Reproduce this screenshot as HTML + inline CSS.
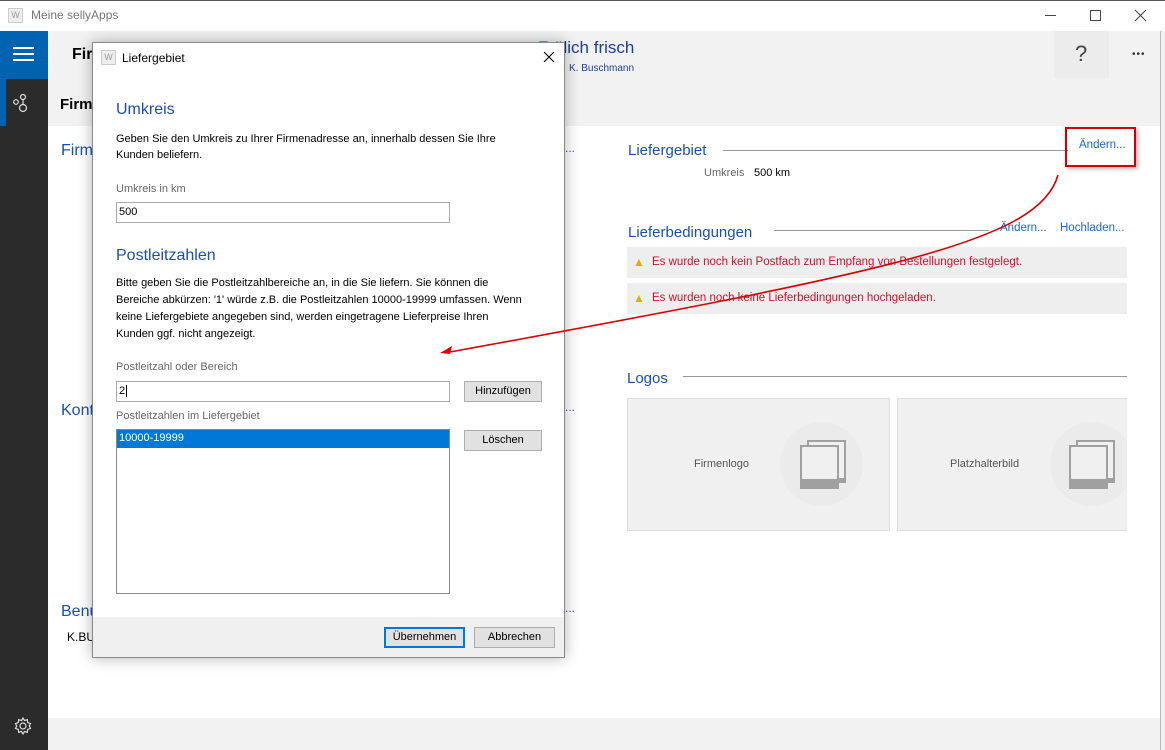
<!DOCTYPE html>
<html><head><meta charset="utf-8"><style>
*{margin:0;padding:0;box-sizing:border-box}
body{width:1165px;height:750px;overflow:hidden;position:relative;background:#fff;font-family:"Liberation Sans",sans-serif;font-size:12px;color:#000}
.a{position:absolute}
.blue{color:#1a4fb0}
.link{color:#1565d8}
</style></head><body>
<!-- title bar -->
<div class="a" style="left:0;top:0;width:1165px;height:31px;background:#fff;border-top:1px solid #555"></div>
<div class="a" style="left:8px;top:8px;width:15px;height:15px;background:#eee;border:1px solid #ccc;font-size:9px;color:#999;text-align:center;line-height:13px">W</div>
<div class="a" style="left:31px;top:8px;font-size:12px;color:#777">Meine sellyApps</div>
<svg class="a" style="left:1040px;top:5px" width="110" height="22" fill="none" stroke="#444" stroke-width="1"><path d="M5 10.5h11"/><rect x="50.5" y="5.5" width="10" height="10"/><path d="M95 5l11 11M106 5l-11 11"/></svg>
<!-- sidebar -->
<div class="a" style="left:0;top:31px;width:48px;height:719px;background:#2b2b2b"></div>
<div class="a" style="left:0;top:31px;width:48px;height:48px;background:#0063b1"></div>
<div class="a" style="left:13px;top:47px;width:21px;height:2px;background:#fff;box-shadow:0 6px 0 #fff,0 12px 0 #fff"></div>
<div class="a" style="left:0;top:79px;width:6px;height:47px;background:#0063b1"></div>
<svg class="a" style="left:12px;top:92px" width="22" height="22" viewBox="0 0 22 22" fill="none" stroke="#ddd" stroke-width="1.2"><circle cx="4" cy="10" r="2.3"/><circle cx="11" cy="5" r="2.5"/><circle cx="11" cy="16" r="3.5"/><path d="M11 7.5v5"/></svg>
<svg class="a" style="left:13px;top:716px" width="20" height="20" viewBox="0 0 20 20" fill="none" stroke="#ddd" stroke-width="1.2"><circle cx="10" cy="10" r="3"/><path d="M10 2l1.5 2.5 2.8-.8.4 2.9 2.8 1-1.2 2.4 1.2 2.4-2.8 1-.4 2.9-2.8-.8L10 18l-1.5-2.5-2.8.8-.4-2.9-2.8-1L3.7 10 2.5 7.6l2.8-1 .4-2.9 2.8.8z"/></svg>
<!-- header -->
<div class="a" style="left:48px;top:31px;width:1112px;height:95px;background:#f2f2f2"></div>
<div class="a" style="left:72px;top:46px;font-size:16px;font-weight:bold">Firmenprofil</div>
<div class="a" style="left:60px;top:96px;font-size:15px;font-weight:bold">Firmenprofil</div>
<div class="a" style="left:538px;top:38px;font-size:17px;color:#1a3f9a">Frölich frisch</div>
<div class="a" style="left:569px;top:63px;font-size:10px;color:#1a3f9a">K. Buschmann</div>
<div class="a" style="left:1054px;top:31px;width:55px;height:47px;background:#ececec"></div>
<div class="a" style="left:1075px;top:41px;font-size:22px;color:#444">?</div>
<div class="a" style="left:1132px;top:49px;font-size:10px;color:#333;letter-spacing:1px">•••</div>
<div class="a" style="left:1160px;top:31px;width:5px;height:719px;background:#f2f2f2;border-left:1px solid #bbb"></div>
<!-- bottom bar -->
<div class="a" style="left:48px;top:718px;width:1112px;height:32px;background:#f2f2f2"></div>
<!-- left content partially hidden -->
<div class="a blue" style="left:61px;top:142px;font-size:16px">Firmenadresse</div>
<div class="a blue" style="left:61px;top:402px;font-size:16px">Kontakt</div>
<div class="a blue" style="left:61px;top:603px;font-size:16px">Benutzer</div>
<div class="a" style="left:67px;top:630px;font-size:12px">K.BUSCHMANN</div>
<div class="a link" style="left:565px;top:141px">...</div>
<div class="a link" style="left:565px;top:400px">...</div>
<div class="a link" style="left:565px;top:601px">...</div>
<!-- right content -->
<div class="a blue" style="left:628px;top:142px;font-size:15px">Liefergebiet</div>
<div class="a" style="left:723px;top:150px;width:345px;height:1px;background:#999"></div>
<div class="a link" style="left:1079px;top:139px;font-size:11.5px">Ändern...</div>
<div class="a" style="left:1065px;top:127px;width:71px;height:40px;border:2px solid #d40000;box-shadow:2px 2px 4px rgba(0,0,0,.3)"></div>
<div class="a" style="left:704px;top:167px;color:#666;font-size:11px">Umkreis</div>
<div class="a" style="left:754px;top:167px;font-size:11px">500 km</div>
<div class="a blue" style="left:628px;top:224px;font-size:15px">Lieferbedingungen</div>
<div class="a" style="left:774px;top:230px;width:215px;height:1px;background:#999"></div>
<div class="a link" style="left:1000px;top:222px;font-size:11.5px">Ändern...</div>
<div class="a link" style="left:1060px;top:222px;font-size:11.5px">Hochladen...</div>
<div class="a" style="left:627px;top:247px;width:500px;height:31px;background:#eee"></div>
<div class="a" style="left:633px;top:255px;color:#e0b000">▲</div>
<div class="a" style="left:652px;top:256px;color:#d0102a;font-size:11.5px">Es wurde noch kein Postfach zum Empfang von Bestellungen festgelegt.</div>
<div class="a" style="left:627px;top:283px;width:500px;height:31px;background:#eee"></div>
<div class="a" style="left:633px;top:291px;color:#e0b000">▲</div>
<div class="a" style="left:652px;top:292px;color:#d0102a;font-size:11.5px">Es wurden noch keine Lieferbedingungen hochgeladen.</div>
<div class="a blue" style="left:627px;top:370px;font-size:15px">Logos</div>
<div class="a" style="left:683px;top:376px;width:444px;height:1px;background:#999"></div>
<div class="a" style="left:627px;top:398px;width:263px;height:133px;background:#f0f0f0;border:1px solid #ddd"></div>
<div class="a" style="left:694px;top:458px;color:#555;font-size:11px">Firmenlogo</div>
<div class="a" style="left:780px;top:422px;width:83px;height:84px;border-radius:50%;background:#ebebeb"></div>
<div class="a" style="left:897px;top:398px;width:230px;height:133px;background:#f0f0f0;border:1px solid #ddd;border-right:none;overflow:hidden"><div class="a" style="left:152px;top:23px;width:83px;height:84px;border-radius:50%;background:#ebebeb"></div></div>
<div class="a" style="left:950px;top:458px;color:#555;font-size:11px">Platzhalterbild</div>
<svg class="a" style="left:800px;top:440px" width="46" height="50"><rect x="7" y="0" width="39" height="43" fill="#a0a0a0"/><rect x="9" y="2" width="35" height="36" fill="#f0f0f0"/><rect x="0" y="5" width="39" height="44" fill="#a0a0a0"/><rect x="2" y="7" width="35" height="32" fill="#f0f0f0" rx="1"/></svg>
<svg class="a" style="left:1069px;top:440px" width="46" height="50"><rect x="7" y="0" width="39" height="43" fill="#a0a0a0"/><rect x="9" y="2" width="35" height="36" fill="#f0f0f0"/><rect x="0" y="5" width="39" height="44" fill="#a0a0a0"/><rect x="2" y="7" width="35" height="32" fill="#f0f0f0" rx="1"/></svg>
<!-- dialog -->
<div class="a" style="left:92px;top:42px;width:473px;height:616px;background:#fff;border:1px solid #888;box-shadow:0 0 14px rgba(0,0,0,.3)"></div>
<div class="a" style="left:101px;top:50px;width:15px;height:15px;background:#eee;border:1px solid #ccc;font-size:9px;color:#999;text-align:center;line-height:13px">W</div>
<div class="a" style="left:122px;top:51px">Liefergebiet</div>
<svg class="a" style="left:543px;top:51px" width="12" height="12" stroke="#000" stroke-width="1.1"><path d="M1 1l10 10M11 1L1 11"/></svg>
<div class="a blue" style="left:116px;top:101px;font-size:16px">Umkreis</div>
<div class="a" style="left:116px;top:131px;font-size:11px;line-height:16px">Geben Sie den Umkreis zu Ihrer Firmenadresse an, innerhalb dessen Sie Ihre<br>Kunden beliefern.</div>
<div class="a" style="left:116px;top:183px;font-size:11px;color:#666">Umkreis in km</div>
<div class="a" style="left:116px;top:202px;width:334px;height:21px;border:1px solid #aaa;padding:3px 2px;font-size:11px">500</div>
<div class="a blue" style="left:116px;top:247px;font-size:16px">Postleitzahlen</div>
<div class="a" style="left:116px;top:275px;font-size:11px;line-height:17px">Bitte geben Sie die Postleitzahlbereiche an, in die Sie liefern. Sie können die<br>Bereiche abkürzen: '1' würde z.B. die Postleitzahlen 10000-19999 umfassen. Wenn<br>keine Liefergebiete angegeben sind, werden eingetragene Lieferpreise Ihren<br>Kunden ggf. nicht angezeigt.</div>
<div class="a" style="left:116px;top:361px;font-size:11px;color:#666">Postleitzahl oder Bereich</div>
<div class="a" style="left:116px;top:381px;width:334px;height:21px;border:1px solid #aaa;padding:3px 2px;font-size:11px">2<span style="border-left:1px solid #000;margin-left:1px"></span></div>
<div class="a" style="left:464px;top:381px;width:78px;height:21px;background:#e1e1e1;border:1px solid #adadad;text-align:center;line-height:19px;font-size:11px">Hinzufügen</div>
<div class="a" style="left:116px;top:410px;font-size:11px;color:#666">Postleitzahlen im Liefergebiet</div>
<div class="a" style="left:116px;top:429px;width:334px;height:165px;border:1px solid #888"></div>
<div class="a" style="left:117px;top:430px;width:332px;height:18px;background:#0078d7;color:#fff;font-size:11px;padding:2px 2px">10000-19999</div>
<div class="a" style="left:464px;top:430px;width:78px;height:21px;background:#e1e1e1;border:1px solid #adadad;text-align:center;line-height:19px;font-size:11px">Löschen</div>
<div class="a" style="left:93px;top:617px;width:471px;height:40px;background:#f0f0f0"></div>
<div class="a" style="left:384px;top:627px;width:81px;height:21px;background:#e1e1e1;border:2px solid #0078d7;text-align:center;line-height:17px;font-size:11px">Übernehmen</div>
<div class="a" style="left:474px;top:627px;width:81px;height:21px;background:#e1e1e1;border:1px solid #adadad;text-align:center;line-height:19px;font-size:11px">Abbrechen</div>
<!-- red arrow -->
<svg class="a" style="left:0;top:0" width="1165" height="750"><path d="M1058 175 C1040 240 900 270 450 352" fill="none" stroke="#d80000" stroke-width="1.6"/><path d="M440 353 L452 346 L450 354 Z" fill="#d80000"/></svg>
</body></html>
